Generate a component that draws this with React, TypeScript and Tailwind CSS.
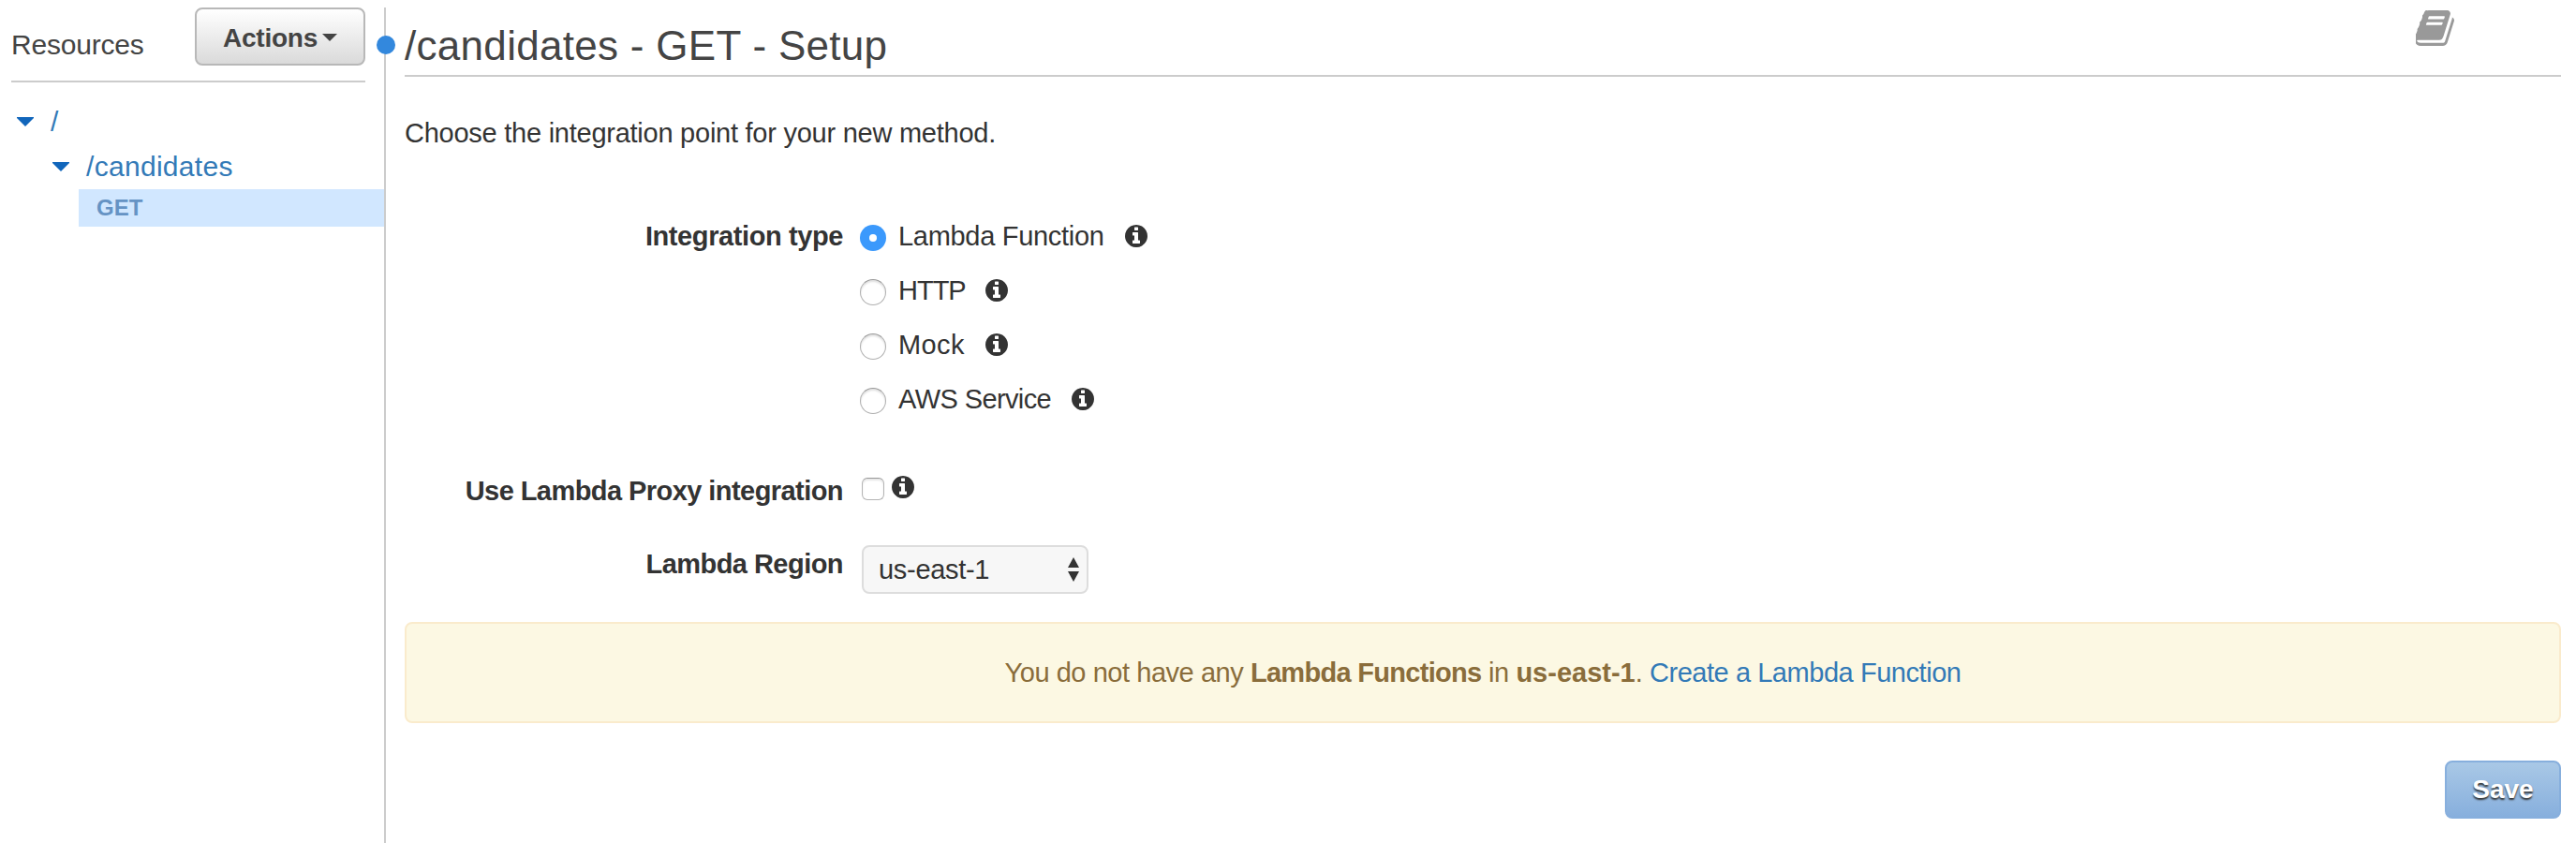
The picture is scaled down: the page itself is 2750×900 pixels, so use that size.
import React from "react";

function InfoIcon({ className = "" }: { className?: string }) {
  return (
    <svg viewBox="128 128 1536 1536" className={`h-6 w-6 shrink-0 fill-[#333] ${className}`}>
      <path d="M1152 1376v-160q0-14-9-23t-23-9h-96v-512q0-14-9-23t-23-9h-320q-14 0-23 9t-9 23v160q0 14 9 23t23 9h96v320h-96q-14 0-23 9t-9 23v160q0 14 9 23t23 9h448q14 0 23-9t9-23zm-128-896v-160q0-14-9-23t-23-9h-192q-14 0-23 9t-9 23v160q0 14 9 23t23 9h192q14 0 23-9t9-23zm640 416q0 209-103 385.500t-279.500 279.500-385.500 103-385.500-103-279.500-279.500-103-385.500 103-385.500 279.500-279.500 385.500-103 385.500 103 279.500 279.500 103 385.500z" />
    </svg>
  );
}

function BookIcon() {
  return (
    <svg viewBox="64 128 1601 1536" className="h-[38px] w-[41px] fill-[#999]" preserveAspectRatio="none">
      <path d="M1639 478q40 57 18 129l-275 906q-19 64-76.500 107.500t-122.500 43.500h-923q-77 0-148.500-53.500t-99.500-131.500q-24-67-2-127 0-4 3-27t4-37q1-8-3-21.500t-3-19.500q2-11 8-21t16.500-23.500 16.500-23.500q23-38 45-91.500t30-91.500q3-10 .5-30t-.5-28q3-11 17-28t17-23q21-36 42-92t25-90q1-9-2.500-32t.5-28q4-13 22-30.500t22-22.500q19-26 42.500-84.500t27.500-96.500q1-8-3-25.500t-2-26.500q2-8 9-18t18-23 17-21q8-12 16.500-30.500t15-35 16-36 19.500-32 26.500-23.500 36-11.500 47.500 5.500l-1 3q38-9 51-9h761q74 0 114 56t18 130l-274 906q-36 119-71.500 153.500t-128.500 34.500h-869q-27 0-38 15-11 16-1 43 24 70 144 70h923q29 0 56-15.500t35-41.500l300-987q7-22 5-57 38 15 59 43zm-1064 2q-4 13 2 22.500t20 9.500h608q13 0 25.500-9.500t16.500-22.500l21-64q4-13-2-22.500t-20-9.500h-608q-13 0-25.500 9.500t-16.500 22.500zm-83 256q-4 13 2 22.500t20 9.500h608q13 0 25.500-9.500t16.500-22.500l21-64q4-13-2-22.500t-20-9.500h-608q-13 0-25.500 9.500t-16.500 22.500z" />
    </svg>
  );
}

function TreeCaret() {
  return (
    <svg viewBox="0 0 18 10" className="h-[10px] w-[18px] shrink-0 fill-[#1166bb]">
      <path d="M0 0h18v1l-9 9-9-9z" />
    </svg>
  );
}

const types = [
  { label: "Lambda Function", checked: true, width: "w-[242px] tracking-[-0.3px]" },
  { label: "HTTP", checked: false, width: "w-[93px] tracking-[-1px]" },
  { label: "Mock", checked: false, width: "w-[92.500px] tracking-[0.4px]" },
  { label: "AWS Service", checked: false, width: "w-[184.500px] tracking-[-0.6px]" },
];

function Radio({ checked }: { checked: boolean }) {
  return checked ? (
    <span className="mt-1 flex h-7 w-7 items-center justify-center rounded-full bg-[#3b99fc]">
      <span className="h-2 w-2 rounded-full bg-white" />
    </span>
  ) : (
    <span className="mt-1 h-7 w-7 rounded-full border border-[#b0b0b0] border-t-[#989898] bg-white shadow-[inset_0_2px_2px_rgba(0,0,0,0.12)]" />
  );
}

export default function App() {
  return (
    <div className="flex h-[900px] w-[2750px] overflow-hidden bg-white font-['Liberation_Sans',Arial,sans-serif] text-[29px] leading-[40px] text-[#333]">
      <aside className="flex w-[410px] shrink-0 flex-col pl-3 pt-2">
        <div className="mr-5 flex h-20 justify-between border-b-2 border-[#ccc]">
          <h2 className="pt-5 text-[30px] tracking-[-0.2px] text-[#444]">Resources</h2>
          <button className="flex h-[62px] w-[182px] items-center justify-center rounded-lg border-2 border-[#b8b8b8] bg-linear-to-b from-white to-[#dadada] pt-[3px] text-[28px] font-bold tracking-[-0.25px] text-[#444]">
            Actions
            <svg viewBox="0 0 16 8" className="mb-[2px] ml-[5px] h-2 w-4 fill-[#444]">
              <path d="M0 0h16l-8 8z" />
            </svg>
          </button>
        </div>
        <nav className="flex flex-col pt-[18px] text-[30px] text-[#337ab7]">
          <div className="flex h-12 items-center gap-[18px] pl-1.5">
            <TreeCaret />
            <span>/</span>
          </div>
          <div className="flex h-12 items-center gap-[18px] pl-[44px]">
            <TreeCaret />
            <span className="tracking-[0.3px]">/candidates</span>
          </div>
          <div className="ml-[72px] h-10 bg-[#d1e7ff] pl-[19px] text-[24px] font-bold text-[#6593c4]">GET</div>
        </nav>
      </aside>
      <div className="relative mt-2 w-[2px] shrink-0 bg-[#ccc]">
        <span className="absolute -left-2 top-[30px] h-5 w-5 rounded-full bg-[#3388dd]" />
      </div>
      <main className="flex flex-1 flex-col pl-5 pr-4">
        <header className="flex h-[82px] shrink-0 justify-between border-b-2 border-[#ccc] pr-[114px] pt-[11px]">
          <h1 className="pt-[13px] text-[44px] leading-[50px] tracking-[0.3px] text-[#444]">/candidates - GET - Setup</h1>
          <BookIcon />
        </header>
        <p className="mt-10 h-10 tracking-[-0.25px]">Choose the integration point for your new method.</p>
        <section className="mt-[70px] flex">
          <div className="w-[468px] text-right font-bold tracking-[-0.4px]">Integration type</div>
          <div className="ml-[18px] flex flex-col gap-[18px]">
            {types.map((t) => (
              <label key={t.label} className="flex h-10 items-center">
                <Radio checked={t.checked} />
                <span className={`ml-[13px] whitespace-nowrap ${t.width}`}>{t.label}</span>
                <InfoIcon />
              </label>
            ))}
          </div>
        </section>
        <section className="mt-[58px] flex h-10">
          <div className="w-[468px] text-right font-bold tracking-[-0.56px]">Use Lambda Proxy integration</div>
          <span className="ml-5 mt-[6px] h-6 w-6 rounded-[6px] border border-[#b4b4b4] border-t-[#989898] bg-white shadow-[inset_0_2px_2px_rgba(0,0,0,0.1)]" />
          <InfoIcon className="ml-2 mt-1" />
        </section>
        <section className="mt-[38px] flex h-[52px]">
          <div className="w-[468px] text-right font-bold tracking-[-0.54px]">Lambda Region</div>
          <div className="ml-5 flex h-[52px] w-[242px] items-center justify-between rounded-lg border-2 border-[#ddd] bg-[#f7f7f7] pl-4 pr-2 tracking-[-0.3px]">
            us-east-1
            <svg viewBox="0 0 12 26" className="h-[26px] w-3 fill-[#333]">
              <path d="M0 11h12l-6-11zM0 15h12l-6 11z" />
            </svg>
          </div>
        </section>
        <div className="mt-[30px] h-[108px] shrink-0 rounded-lg border-2 border-[#faebcc] bg-[#fcf8e3] pt-8 text-center tracking-[-0.45px] text-[#8a6d3b]">
          You do not have any <b className="tracking-[-0.7px]">Lambda Functions</b> in{" "}
          <b className="tracking-[0px]">us-east-1</b>. <a className="text-[#337ab7]">Create a Lambda Function</a>
        </div>
        <button className="mt-10 h-[62px] w-[124px] self-end rounded-lg border-2 border-[#87afdd] bg-linear-to-b from-[#a9c8e6] to-[#87afdd] text-[28px] font-bold text-white [text-shadow:0_2px_2px_#333]">
          Save
        </button>
      </main>
    </div>
  );
}
